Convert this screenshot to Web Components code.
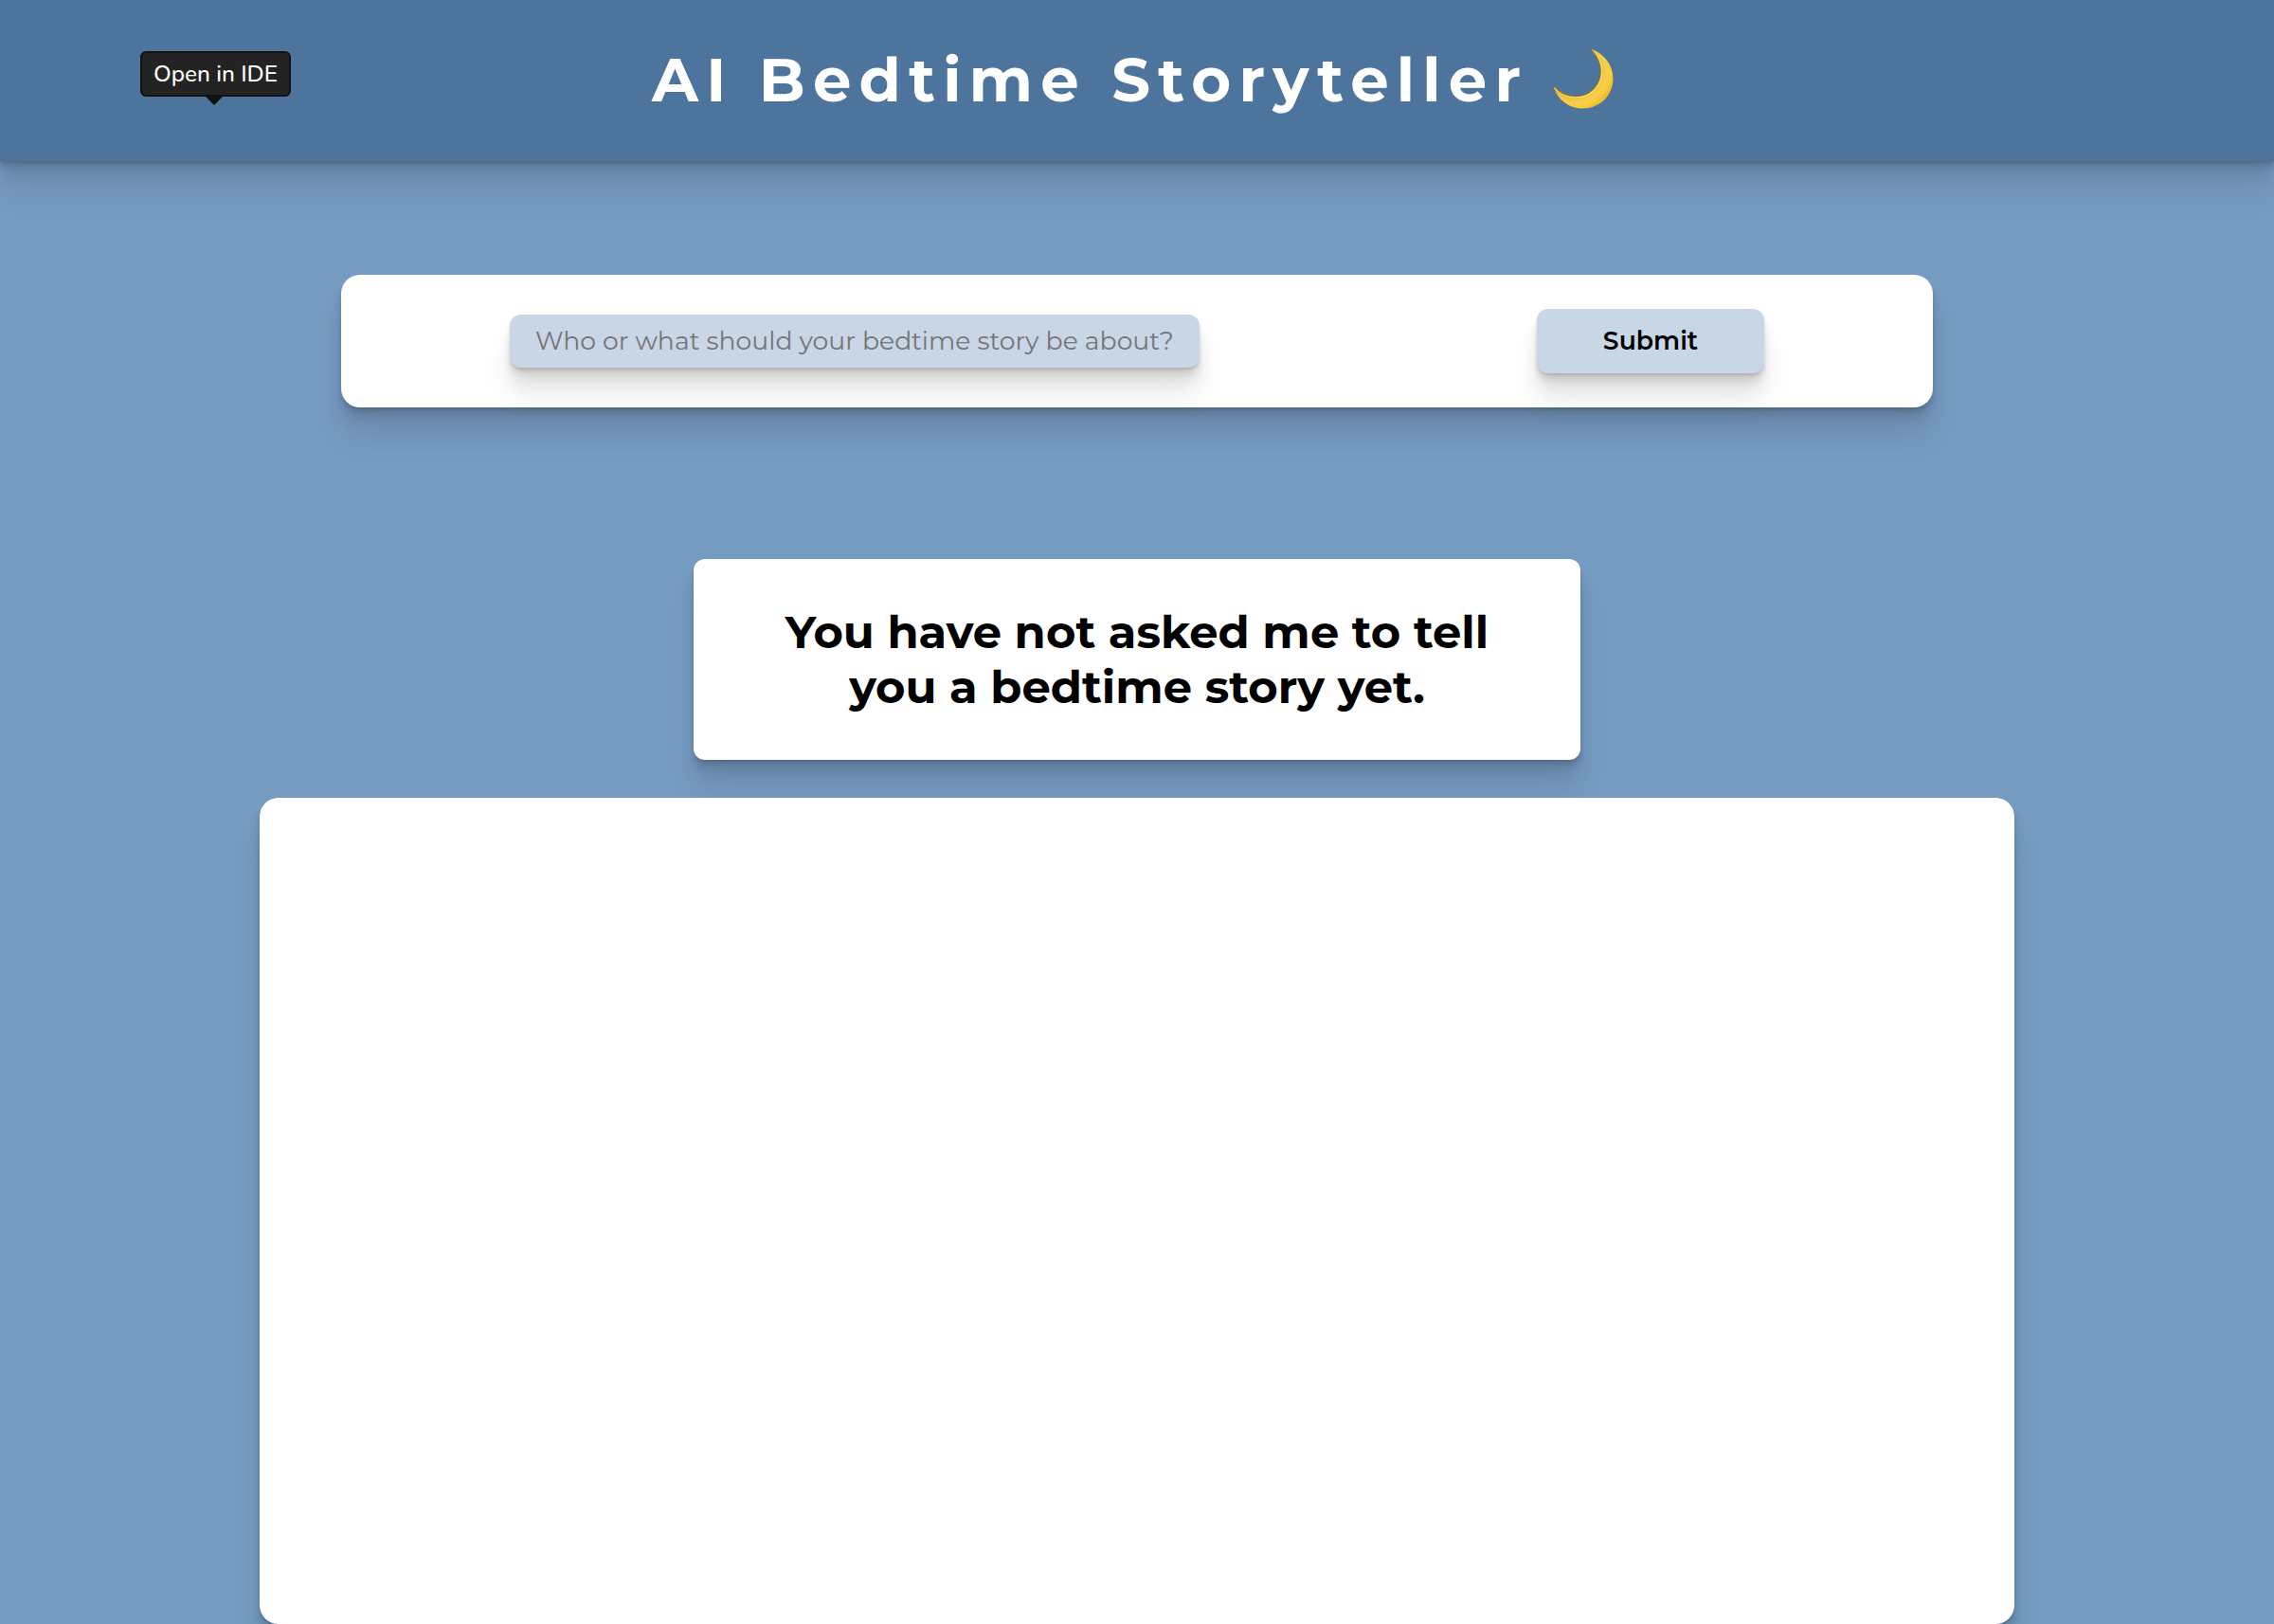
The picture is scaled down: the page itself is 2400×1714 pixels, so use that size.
<!DOCTYPE html>
<html lang="en">
<head>
<meta charset="utf-8">
<title>AI Bedtime Storyteller</title>
<style>
  html, body { margin: 0; height: 100%; overflow: hidden; background: #769bc1; }
  body {
    font-family: Montserrat, Inter, "Open Sans", sans-serif;
    color: #000;
    --panel: #c9d6e6;
    --lift: 0 2px 2px rgba(0,0,0,.07), 0 4px 4px rgba(0,0,0,.07), 0 8px 8px rgba(0,0,0,.07), 0 16px 16px rgba(0,0,0,.07), 0 32px 32px rgba(0,0,0,.07);
  }
</style>
</head>
<body>
<story-app></story-app>
<script>
const define = (name, html) => customElements.define(name, class extends HTMLElement {
  constructor() {
    super();
    this.attachShadow({ mode: 'open' }).innerHTML = html;
  }
});

define('moon-icon', `
  <style>:host { display: block; width: 64px; height: 64px; } svg { display: block; }</style>
  <svg width="64" height="64" viewBox="0 0 61 64" preserveAspectRatio="none" aria-hidden="true">
    <defs>
      <radialGradient id="g" gradientUnits="userSpaceOnUse" cx="20" cy="24" r="42">
        <stop offset=".62" stop-color="#c98a1c"/>
        <stop offset=".68" stop-color="#f0c137"/>
        <stop offset=".8" stop-color="#f6cf52"/>
        <stop offset=".92" stop-color="#f9cc36"/>
        <stop offset="1" stop-color="#e9bd35"/>
      </radialGradient>
    </defs>
    <path d="M38.5 .8C52 6 60.500 18 60.500 32C60.500 50 47 63.500 30 63.500C16 63.500 4.500 54 .5 40.500C7 48 15 51 23 51C38 51 48.500 39 48.500 24C48.500 15 44.500 7 38.500 .8Z" fill="url(#g)"/>
    <path d="M1.500 41.500C7 48.500 15 51.700 23 51.700C38 51.700 49 39 49 24C49 15.500 45 8 40 2.300" fill="none" stroke="#ffe45e" stroke-width="1.300"/>
    <path d="M2 41C7 48 15 50.700 23 50.700C37.500 50.700 48 39 48 24C48 15.500 44.500 8 39.500 2" fill="none" stroke="#a8690f" stroke-opacity=".75" stroke-width="1"/>
  </svg>`);

define('ide-tooltip', `
  <style>
    :host { display: block; position: absolute; left: 148px; top: 54px; }
    .tip {
      box-sizing: border-box; width: 159px; height: 48px; padding-bottom: 1px; border: 2px solid #111; border-radius: 6px;
      background: #232323; color: #fff; display: flex; align-items: center; justify-content: center;
      font: 550 24.300px/28px Nunito, Lato, sans-serif; white-space: nowrap;
    }
    .arrow { width: 18px; height: 9px; margin: 0 0 0 69px; background: #111; clip-path: polygon(0 0, 100% 0, 50% 100%); }
  </style>
  <div class="tip"><slot></slot></div><div class="arrow"></div>`);

define('app-header', `
  <style>
    :host { display: flex; justify-content: center; height: 170px; background: #4d749c; box-shadow: var(--lift); box-sizing: border-box; padding-top: 45px; }
    h1 { margin: 0; font-size: 64px; line-height: 78px; font-weight: 700; letter-spacing: 8.230px; color: #fff; white-space: nowrap; }
    .row { display: flex; width: 1024px; }
    .text { width: 951px; }
    moon-icon { margin-top: 6px; }
  </style>
  <div class="row"><h1 class="text"><slot></slot></h1><moon-icon></moon-icon></div>`);

define('prompt-form', `
  <style>
    :host { display: flex; align-items: center; justify-content: space-between; box-sizing: border-box; width: 1680px; height: 140px; padding: 0 178px; background: #fff; border-radius: 20px; box-shadow: var(--lift); }
    input, button { box-sizing: border-box; margin: 0; border: 0; border-radius: 12px; background: var(--panel); box-shadow: var(--lift); font-family: inherit; }
    input { width: 728px; height: 56px; padding: 0 20px 2px 27px; font-size: 26.667px; font-weight: 400; letter-spacing: .02px; }
    input::placeholder { color: #757575; opacity: 1; }
    button { width: 240px; height: 68px; padding: 0 0 1px; font-size: 26.667px; font-weight: 600; color: #000; }
  </style>
  <input type="text" placeholder="Who or what should your bedtime story be about?">
  <button type="button">Submit</button>`);

define('story-message', `
  <style>
    :host { display: flex; align-items: center; justify-content: center; width: 936px; height: 212px; background: #fff; border-radius: 12px; box-shadow: var(--lift); }
    h2 { margin: 0; font-size: 48px; line-height: 58px; font-weight: 700; text-align: center; white-space: nowrap; }
  </style>
  <h2><slot></slot></h2>`);

define('story-panel', `
  <style>:host { display: block; width: 1852px; height: 872px; background: #fff; border-radius: 20px; box-shadow: var(--lift); }</style>
  <slot></slot>`);

define('story-app', `
  <style>
    :host { display: block; position: relative; }
    main { display: flex; flex-direction: column; align-items: center; }
    prompt-form { margin-top: 120px; }
    story-message { margin-top: 160px; }
    story-panel { margin-top: 40px; }
  </style>
  <app-header>AI Bedtime Storyteller</app-header>
  <main>
    <prompt-form></prompt-form>
    <story-message>You have not asked me to tell<br>you a bedtime story yet.</story-message>
    <story-panel></story-panel>
  </main>
  <ide-tooltip>Open in IDE</ide-tooltip>`);
</script>
</body>
</html>
